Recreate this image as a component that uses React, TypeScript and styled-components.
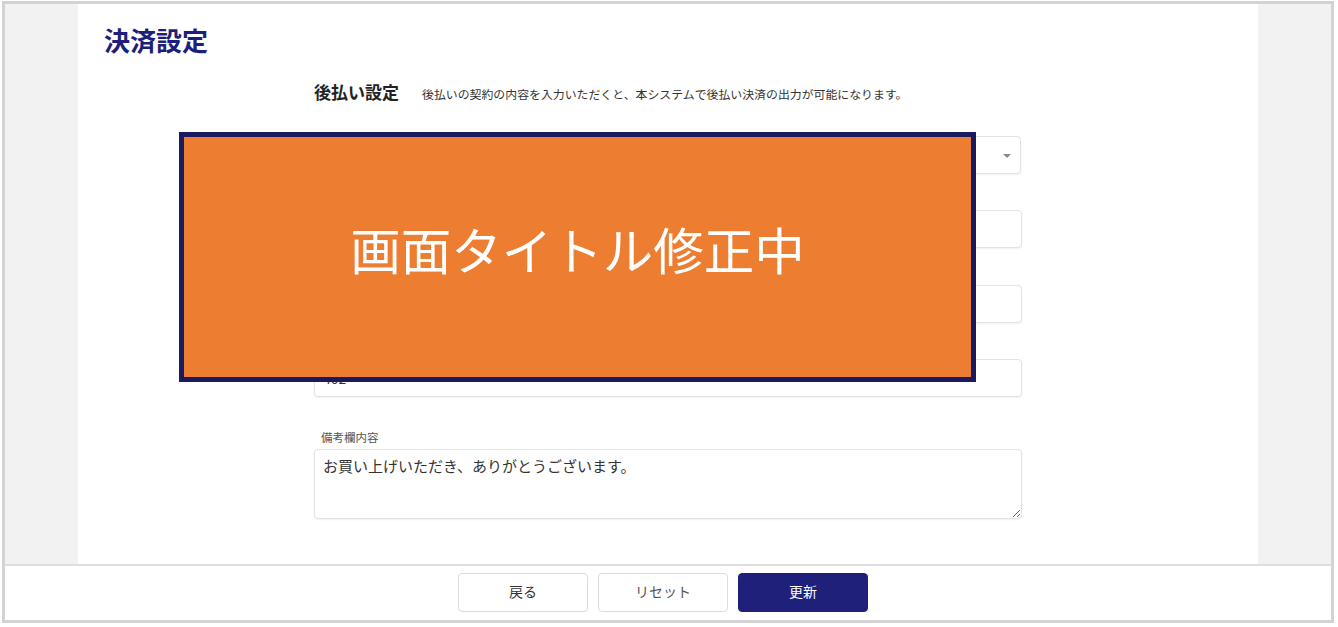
import React from "react";
import styled, { createGlobalStyle } from "styled-components";

const GlobalStyle = createGlobalStyle`
  html, body { margin: 0; padding: 0; background: #ffffff; }
  body { font-family: "Noto Sans CJK JP", "Noto Sans", sans-serif; color: #333; }
  * { box-sizing: border-box; }
`;

const Frame = styled.div`
  margin: 1px 0 0 2px;
  width: 1332px;
  height: 622px;
  border: 3px solid #d3d3d3;
  display: flex;
  flex-direction: column;
  background: #fff;
`;

const Main = styled.div`
  display: grid;
  grid-template-columns: 73px 1180px 73px;
  height: 560px;
`;

const Side = styled.div`
  background: #f2f2f2;
`;

const Content = styled.div`
  position: relative;
  background: #fff;
  padding: 18px 0 0 26px;
`;

const PageTitle = styled.h1`
  margin: 0;
  font-size: 26px;
  line-height: 36px;
  font-weight: 700;
  color: #1d1f7a;
`;

const FormColumn = styled.div`
  width: 708px;
  margin: 22px 0 0 210px;
  display: flex;
  flex-direction: column;
`;

const SectionHeader = styled.div`
  display: flex;
  align-items: baseline;
  gap: 23px;
  height: 24px;
  line-height: 24px;
`;

const SectionTitle = styled.span`
  font-size: 17px;
  font-weight: 700;
  color: #222;
`;

const SectionNote = styled.span`
  font-size: 11.9px;
  color: #333;
`;

const Group = styled.div<{ $mt: number }>`
  display: flex;
  flex-direction: column;
  margin-top: ${(p) => p.$mt}px;
`;

const Label = styled.label<{ $mb: number }>`
  display: block;
  font-size: 11.5px;
  line-height: 14px;
  height: 14px;
  color: #555;
  padding-left: 7px;
  margin-bottom: ${(p) => p.$mb}px;
`;

const TextInput = styled.input`
  width: 708px;
  height: 38px;
  border: 1px solid #e3e3e3;
  border-radius: 4px;
  box-shadow: 0 1px 2px rgba(0, 0, 0, 0.06);
  padding: 0 8px;
  font-family: "Noto Sans CJK JP", sans-serif;
  font-size: 14px;
  color: #333;
  background: #fff;
  outline: none;
`;

const SelectBox = styled.div`
  position: relative;
  width: 707px;
  height: 38px;
  border: 1px solid #e3e3e3;
  border-radius: 4px;
  box-shadow: 0 1px 2px rgba(0, 0, 0, 0.06);
  background: #fff;
  display: flex;
  align-items: center;
  padding: 0 8px;
  font-size: 14px;
  color: #333;
`;

const Caret = styled.span`
  position: absolute;
  right: 9px;
  top: 17px;
  width: 0;
  height: 0;
  border-left: 4px solid transparent;
  border-right: 4px solid transparent;
  border-top: 4px solid #8a8a8a;
`;

const TextArea = styled.textarea`
  width: 708px;
  height: 70px;
  border: 1px solid #e3e3e3;
  border-radius: 4px;
  box-shadow: 0 1px 2px rgba(0, 0, 0, 0.06);
  padding: 5px 8px;
  font-family: "Noto Sans CJK JP", sans-serif;
  font-size: 15px;
  line-height: 22px;
  color: #333;
  resize: vertical;
  outline: none;
  background: #fff;
`;

const Overlay = styled.div`
  position: absolute;
  left: 101px;
  top: 128px;
  width: 797px;
  height: 250px;
  background: #ed7d31;
  border: 5px solid #1c1a5e;
  display: flex;
  align-items: center;
  justify-content: center;
  padding-bottom: 18px;
`;

const OverlayText = styled.span`
  color: #fff;
  font-size: 50.5px;
  font-weight: 400;
  line-height: 60px;
`;

const Footer = styled.div`
  flex: 1;
  border-top: 2px solid #dedede;
  display: flex;
  align-items: center;
  justify-content: center;
  gap: 10px;
  padding: 0 10px 2px 0;
  background: #fff;
`;

const Button = styled.button<{ $primary?: boolean; $muted?: boolean }>`
  width: 130px;
  height: 39px;
  border-radius: 4px;
  border: 1px solid ${(p) => (p.$primary ? "#1e2079" : "#dcdcdc")};
  background: ${(p) => (p.$primary ? "#1e2079" : "#fff")};
  color: ${(p) => (p.$primary ? "#fff" : p.$muted ? "#555" : "#333")};
  font-family: "Noto Sans CJK JP", sans-serif;
  font-size: 14px;
  line-height: 20px;
  cursor: pointer;
  padding: 0 0 3px;
`;

export default function App() {
  return (
    <>
      <GlobalStyle />
      <Frame>
        <Main>
          <Side />
          <Content>
            <PageTitle>決済設定</PageTitle>
            <FormColumn>
              <SectionHeader>
                <SectionTitle>後払い設定</SectionTitle>
                <SectionNote>
                  後払いの契約の内容を入力いただくと、本システムで後払い決済の出力が可能になります。
                </SectionNote>
              </SectionHeader>
              <Group $mt={27}>
                <Label $mb={-9}>後払い決済サービス</Label>
                <SelectBox>
                  <span>NP後払い</span>
                  <Caret />
                </SelectBox>
              </Group>
              <Group $mt={18}>
                <Label $mb={4}>加盟店コード</Label>
                <TextInput defaultValue="" />
              </Group>
              <Group $mt={19}>
                <Label $mb={4}>SPコード</Label>
                <TextInput defaultValue="" />
              </Group>
              <Group $mt={18}>
                <Label $mb={4}>ターミナルID</Label>
                <TextInput defaultValue="402" />
              </Group>
              <Group $mt={33}>
                <Label $mb={5}>備考欄内容</Label>
                <TextArea defaultValue="お買い上げいただき、ありがとうございます。" />
              </Group>
            </FormColumn>
            <Overlay>
              <OverlayText>画面タイトル修正中</OverlayText>
            </Overlay>
          </Content>
          <Side />
        </Main>
        <Footer>
          <Button>戻る</Button>
          <Button $muted>リセット</Button>
          <Button $primary>更新</Button>
        </Footer>
      </Frame>
    </>
  );
}
